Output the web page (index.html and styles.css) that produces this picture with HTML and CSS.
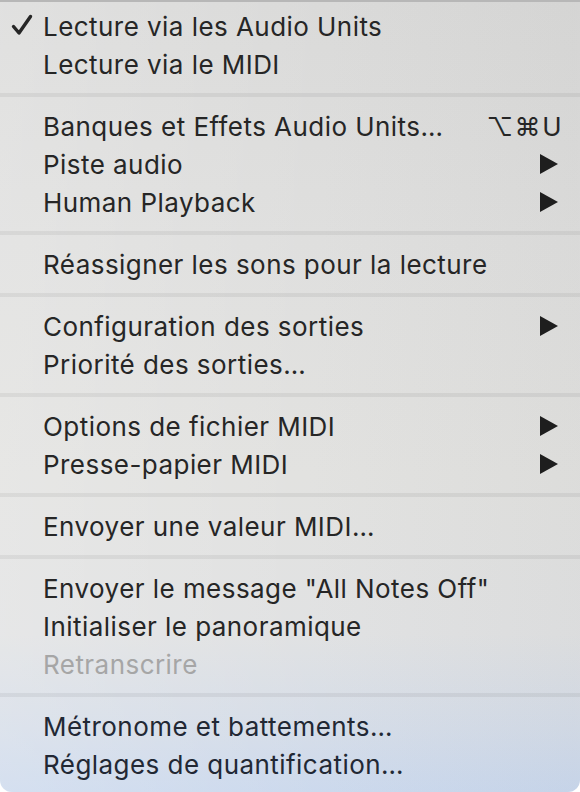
FILE: index.html
```html
<!DOCTYPE html>
<html lang="fr">
<head>
    <meta charset="UTF-8">
    <meta name="viewport" content="width=device-width, initial-scale=1.0">
    <title>Menu Lecture</title>
    <link rel="stylesheet" href="styles.css">
</head>
<body>
    <div class="menu">
        <div class="item">
            <span class="mark">
                <svg width="22" height="22" viewBox="0 0 22 22"><path d="M2.5 12.5 L8 19 L19.5 2.5" fill="none" stroke="#262626" stroke-width="3.4" stroke-linecap="round" stroke-linejoin="round"/></svg>
            </span>
            <span class="label">Lecture via les Audio Units</span>
        </div>
        <div class="item"><span class="mark"></span><span class="label">Lecture via le MIDI</span></div>

        <div class="sep"></div>

        <div class="item">
            <span class="mark"></span>
            <span class="label">Banques et Effets Audio Units…</span>
            <span class="shortcut">⌥⌘U</span>
        </div>
        <div class="item"><span class="mark"></span><span class="label">Piste audio</span><span class="arrow"></span></div>
        <div class="item"><span class="mark"></span><span class="label">Human Playback</span><span class="arrow"></span></div>

        <div class="sep"></div>

        <div class="item"><span class="mark"></span><span class="label">Réassigner les sons pour la lecture</span></div>

        <div class="sep"></div>

        <div class="item"><span class="mark"></span><span class="label">Configuration des sorties</span><span class="arrow"></span></div>
        <div class="item"><span class="mark"></span><span class="label">Priorité des sorties…</span></div>

        <div class="sep"></div>

        <div class="item"><span class="mark"></span><span class="label">Options de fichier MIDI</span><span class="arrow"></span></div>
        <div class="item"><span class="mark"></span><span class="label">Presse-papier MIDI</span><span class="arrow"></span></div>

        <div class="sep"></div>

        <div class="item"><span class="mark"></span><span class="label">Envoyer une valeur MIDI…</span></div>

        <div class="sep"></div>

        <div class="item"><span class="mark"></span><span class="label">Envoyer le message "All Notes Off"</span></div>
        <div class="item"><span class="mark"></span><span class="label">Initialiser le panoramique</span></div>
        <div class="item disabled"><span class="mark"></span><span class="label">Retranscrire</span></div>

        <div class="sep"></div>

        <div class="item blue"><span class="mark"></span><span class="label">Métronome et battements…</span></div>
        <div class="item blue"><span class="mark"></span><span class="label">Réglages de quantification…</span></div>
    </div>
</body>
</html>
```

FILE: styles.css
```css
body {
    margin: 0;
    background: #ffffff;
    font-family: Inter, "Noto Sans", "DejaVu Sans", sans-serif;
}
.menu {
    width: 580px;
    height: 792px;
    box-sizing: border-box;
    padding: 5px 0 9px;
    border-top: 2px solid #b7b7b7;
    border-radius: 0 0 12px 12px;
    background:
        linear-gradient(90deg, rgba(255, 255, 255, 0.22) 0%, rgba(255, 255, 255, 0.06) 55%, rgba(0, 0, 0, 0.015) 100%),
        linear-gradient(180deg, #d8d8d7 0%, #dddddc 30%, #e0e0de 60%, #dfe0e1 80%, #d3dbe7 92%, #c9d7ec 100%);
    color: #262626;
    font-size: 26px;
    letter-spacing: 0.45px;
}
.item {
    display: flex;
    align-items: center;
    height: 38px;
    padding-right: 22px;
}
.mark {
    width: 43px;
    flex: none;
    display: flex;
    justify-content: center;
    padding-left: 1px;
    box-sizing: border-box;
}
.mark svg {
    display: block;
    margin-top: -2px;
}
.label {
    flex: 1;
    white-space: nowrap;
}
.shortcut {
    margin-right: -5px;
    letter-spacing: 1.5px;
}
.arrow {
    width: 0;
    height: 0;
    border-top: 10px solid transparent;
    border-bottom: 10px solid transparent;
    border-left: 18px solid #1e1e1e;
}
.disabled {
    color: #a6a6a6;
}
.blue {
    color: #222834;
}
.sep {
    height: 4px;
    margin: 10px 0;
    background: rgba(0, 0, 0, 0.055);
}
```
